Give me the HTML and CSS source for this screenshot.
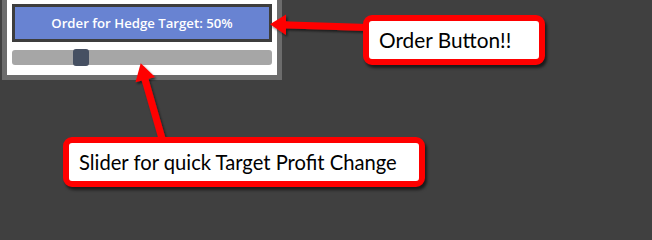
FILE: index.html
```html
<!DOCTYPE html>
<html lang="en">
<head>
<meta charset="utf-8">
<title>Hedge order panel</title>
<link rel="stylesheet" href="styles.css">
</head>
<body>
<div class="stage">
  <div class="panel">
    <button class="order-btn" type="button">Order for Hedge Target: 50%</button>
    <div class="slider"><div class="thumb"></div></div>
  </div>
  <svg class="arrows" width="652" height="200" viewBox="0 0 652 200">
    <defs>
      <filter id="shadow" x="-20%" y="-20%" width="140%" height="140%">
        <feDropShadow dx="1.5" dy="2" stdDeviation="1.2" flood-color="#000" flood-opacity="0.55"/>
      </filter>
    </defs>
    <g filter="url(#shadow)" fill="#ff0000">
      <line x1="282" y1="24.8" x2="368" y2="27.5" stroke="#ff0000" stroke-width="7"/>
      <polygon points="270,24.3 286,14.5 286,35"/>
      <line x1="144" y1="76" x2="163" y2="142" stroke="#ff0000" stroke-width="7"/>
      <polygon points="140.7,63.3 155,77 135.5,82.3"/>
    </g>
  </svg>
  <div class="callout callout-order">Order Button!!</div>
  <div class="callout callout-slider">Slider for quick Target Profit Change</div>
</div>
</body>
</html>
```

FILE: styles.css
```css
html, body {
  margin: 0;
  padding: 0;
  background: #404040;
}

.stage {
  position: relative;
  width: 652px;
  height: 200px;
  overflow: hidden;
  background: #404040;
}

.panel {
  box-sizing: border-box;
  width: 280px;
  margin-left: 2px;
  border: 5px solid #6c6c6c;
  border-top: 0;
  background: #ffffff;
  padding: 4px 5px 10px;
  display: flex;
  flex-direction: column;
  gap: 8px;
}

.order-btn {
  box-sizing: border-box;
  display: block;
  width: 100%;
  height: 38px;
  margin: 0;
  padding: 0;
  border: 3px solid #3d3d3d;
  background: #6883d2;
  color: #ffffff;
  font-family: "Open Sans", "DejaVu Sans", sans-serif;
  font-weight: 600;
  font-size: 13.2px;
  line-height: 32px;
  text-align: center;
}

.slider {
  box-sizing: border-box;
  height: 15px;
  border-radius: 3px;
  background: #a6a6a6;
  display: flex;
  align-items: center;
  padding-left: 61px;
}

.thumb {
  flex: none;
  width: 16px;
  height: 17px;
  border-radius: 3px;
  background: #465062;
}

.arrows {
  position: absolute;
  left: 0;
  top: 0;
  pointer-events: none;
}

.callout {
  position: absolute;
  box-sizing: border-box;
  height: 50px;
  border: 6px solid #ff0000;
  border-radius: 9px;
  background: #ffffff;
  box-shadow: 2px 3px 3px rgba(0, 0, 0, 0.6);
  display: flex;
  align-items: center;
  padding-left: 10px;
  color: #000000;
  font-family: "Lato", "Liberation Sans", sans-serif;
  line-height: 24px;
  white-space: nowrap;
}

.callout-order {
  left: 363px;
  top: 15px;
  width: 182px;
  font-size: 20.8px;
}

.callout-slider {
  left: 63px;
  top: 137px;
  width: 362px;
  font-size: 20.2px;
}
```
